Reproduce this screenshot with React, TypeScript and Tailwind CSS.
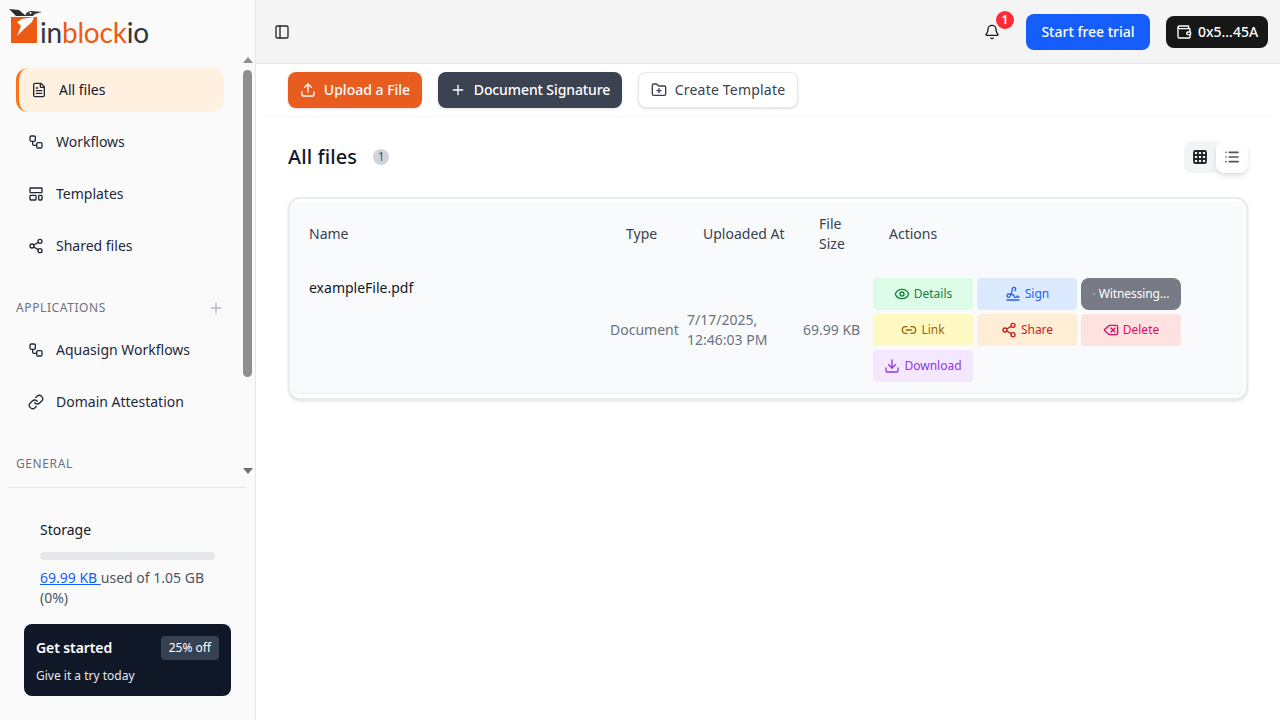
import {
  Bell,
  Delete,
  Download,
  Eye,
  FileText,
  FolderPlus,
  Grid3x3,
  LayoutTemplate,
  Link as LinkIcon,
  Link2,
  List,
  PanelLeft,
  Plus,
  Share2,
  Signature,
  Upload,
  Wallet,
  Workflow,
} from "lucide-react";

const ACTIONS = [
  { label: "Details", icon: Eye, color: "bg-[#dcfce7] text-[#15803d]" },
  { label: "Sign", icon: Signature, color: "bg-[#dbeafe] text-[#2563eb]" },
  { label: "Witnessing...", icon: null, color: "bg-[#777b85] text-white rounded-lg tracking-[-0.1px]" },
  { label: "Link", icon: Link2, color: "bg-[#fef9c3] text-[#a16207]" },
  { label: "Share", icon: Share2, color: "bg-[#ffedd5] text-[#c81e1e]" },
  { label: "Delete", icon: Delete, color: "bg-[#fee2e2] text-[#db0f63]" },
  { label: "Download", icon: Download, color: "bg-[#f3e8ff] text-[#9333ea]" },
];

function NavItem({ icon: Icon, label }: { icon: typeof Eye; label: string }) {
  return (
    <div className="flex h-11 shrink-0 items-center gap-3 rounded-xl pl-3 text-sm text-[#1e293b]">
      <Icon size={16} className="shrink-0 text-[#1f2937]" />
      <span>{label}</span>
    </div>
  );
}

function SectionLabel({ label, plus }: { label: string; plus?: boolean }) {
  return (
    <div className="flex h-5 shrink-0 items-center justify-between text-xs tracking-[0.05em] text-[#6b7280]">
      <span>{label}</span>
      {plus && <Plus size={16} className="text-[#b4b9c4]" />}
    </div>
  );
}

function Logo() {
  return (
    <div className="flex h-[52px] shrink-0 items-end pb-[6px] pl-[11px]">
      <svg width="40" height="36" viewBox="0 0 40 36" className="-mr-[11px] mb-[2px] shrink-0 overflow-visible">
        <path d="M0 9h26v26H0z" fill="#ee5a12" />
        <path d="M11 11l12-2-2 5-8 7-7 7 4-10-4-4z" fill="#fff" />
        <path d="M-2 1l10 1 7 6-10 0z" fill="#2b2b2b" />
        <path d="M14 8c1-4 4-5 7-5l10 1-7 2-2 2z" fill="#3a3a3a" />
        <circle cx="19.5" cy="5" r="1" fill="#fff" />
      </svg>
      <span className="font-['Lato',sans-serif] text-[28px] leading-[27px] font-normal tracking-[-0.2px] text-[#33363b]">
        in<span className="text-[#ee5a12]">block</span>io
      </span>
    </div>
  );
}

function Scrollbar() {
  return (
    <div className="absolute top-0 right-0 flex h-full w-[15px] flex-col items-center">
      <svg width="10" height="6" viewBox="0 0 10 6" className="mt-[5px] shrink-0">
        <path d="M5 0l5 6H0z" fill="#8f8f8f" />
      </svg>
      <div className="mt-[7px] h-[307px] w-[9px] rounded-full bg-[#8f8f8f]" />
      <svg width="10" height="6" viewBox="0 0 10 6" className="mt-auto mb-[6px] shrink-0">
        <path d="M5 6L10 0H0z" fill="#6f6f6f" />
      </svg>
    </div>
  );
}

function Sidebar() {
  return (
    <aside className="flex h-full w-[256px] shrink-0 flex-col border-r border-[#e5e7eb] bg-[#fafafa]">
      <Logo />
      <div className="relative h-[428px] shrink-0 overflow-hidden pl-4">
        <div className="flex w-[208px] flex-col gap-2 pt-4">
          <div className="flex h-11 shrink-0 items-center gap-3 rounded-xl border-l-[3px] border-[#f97316] bg-[#fff0e0] pl-3 text-sm text-[#0f172a]">
            <FileText size={16} className="shrink-0 text-[#1f2937]" />
            <span>All files</span>
          </div>
          <NavItem icon={Workflow} label="Workflows" />
          <NavItem icon={LayoutTemplate} label="Templates" />
          <NavItem icon={Share2} label="Shared files" />
          <div className="mt-[22px] mb-[2px]">
            <SectionLabel label="APPLICATIONS" plus />
          </div>
          <NavItem icon={Workflow} label="Aquasign Workflows" />
          <NavItem icon={LinkIcon} label="Domain Attestation" />
          <div className="mt-[22px] mb-[2px]">
            <SectionLabel label="GENERAL" />
          </div>
        </div>
        <Scrollbar />
      </div>
      <div className="mx-2 mt-[7px] h-px shrink-0 bg-[#e5e7eb]" />
      <div className="px-10 pt-8">
        <div className="text-sm leading-[20px] text-[#111827]">Storage</div>
        <div className="mt-3 h-2 rounded-full bg-[#e5e7eb]" />
        <p className="mt-2 text-sm leading-[20px] text-[#4b5563]">
          <span className="text-[#155dfc] underline">69.99 KB </span>used of 1.05 GB (0%)
        </p>
      </div>
      <div className="mx-6 mt-4 h-[72px] rounded-lg bg-[#101828] px-3 pt-3">
        <div className="flex items-center justify-between">
          <span className="text-sm font-semibold tracking-[-0.1px] text-white">Get started</span>
          <span className="rounded bg-[#364153] px-2 py-1 text-xs text-white">25% off</span>
        </div>
        <div className="mt-2 text-xs leading-[16px] text-[#e5e7eb]">Give it a try today</div>
      </div>
    </aside>
  );
}

function Header() {
  return (
    <header className="flex h-16 shrink-0 items-center border-b border-[#e5e7eb] bg-[#f4f4f5] pr-3 pl-[18px]">
      <PanelLeft size={16} className="text-[#262626]" />
      <div className="ml-auto flex items-center">
        <div className="relative mr-[26px] text-[#171717]">
          <Bell size={16} />
          <span className="absolute -top-[13px] left-[12px] flex h-[18px] w-[18px] items-center justify-center rounded-full bg-[#fb2c36] text-xs font-semibold text-white">
            1
          </span>
        </div>
        <button className="h-9 w-[124px] rounded-lg bg-[#155dfc] text-sm font-medium text-white">
          Start free trial
        </button>
        <button className="ml-4 flex h-8 w-[102px] items-center justify-center gap-[6px] rounded-lg bg-[#171717] text-sm font-medium text-white">
          <Wallet size={16} />
          0x5...45A
        </button>
      </div>
    </header>
  );
}

function Toolbar() {
  return (
    <div className="mx-2 flex h-[53px] shrink-0 items-start gap-4 border-b border-[#f3f4f6] px-6 pt-2">
      <button className="flex h-9 w-[134px] items-center justify-center gap-2 rounded-lg bg-[#e85c1f] text-sm font-medium text-white shadow-sm">
        <Upload size={16} />
        Upload a File
      </button>
      <button className="flex h-9 w-[184px] items-center justify-center gap-2 rounded-lg bg-[#3b4252] text-sm font-medium tracking-[-0.1px] text-white shadow-sm">
        <Plus size={16} />
        Document Signature
      </button>
      <button className="flex h-9 w-[160px] items-center justify-center gap-2 rounded-lg border border-[#e5e7eb] bg-white text-sm tracking-[0.2px] text-[#374151] shadow-sm">
        <FolderPlus size={16} />
        Create Template
      </button>
    </div>
  );
}

function FilesTable() {
  return (
    <div className="rounded-xl border-2 border-[#ebecef] bg-white pt-[3px] pr-[2px] pb-[4px] pl-[1px] shadow-sm">
      <div className="rounded-lg border-b border-[#f1f2f4] bg-[#f9fafb]">
        <table className="w-full table-fixed border-collapse text-sm">
          <colgroup>
            <col className="w-[319px]" />
            <col className="w-[77px]" />
            <col className="w-[116px]" />
            <col className="w-[70px]" />
            <col />
          </colgroup>
          <thead>
            <tr className="h-[65px] text-left text-[#374151]">
              <th className="pb-[2px] pl-[18px] font-normal">Name</th>
              <th className="pb-[2px] pl-4 font-normal">Type</th>
              <th className="pb-[2px] pl-4 font-normal">Uploaded At</th>
              <th className="pb-[2px] pl-4 font-normal">
                File
                <br />
                Size
              </th>
              <th className="pb-[2px] pl-4 font-normal">Actions</th>
            </tr>
          </thead>
          <tbody>
            <tr className="h-[126px]">
              <td className="pt-[11px] pl-[18px] align-top text-[#111827]">exampleFile.pdf</td>
              <td className="whitespace-nowrap text-[#6b7280]">Document</td>
              <td className="text-[#6b7280]">
                7/17/2025,
                <br />
                12:46:03 PM
              </td>
              <td className="whitespace-nowrap text-[#6b7280]">69.99 KB</td>
              <td>
                <div className="flex w-[308px] flex-wrap gap-1">
                  {ACTIONS.map(({ label, icon: Icon, color }) => (
                    <button
                      key={label}
                      className={`flex h-8 w-[100px] items-center justify-center gap-1 rounded text-xs ${color}`}
                    >
                      {Icon ? <Icon size={16} /> : <span className="h-[2px] w-[2px] rounded-full bg-[#a3a6ad]" />}
                      {label}
                    </button>
                  ))}
                </div>
              </td>
            </tr>
          </tbody>
        </table>
      </div>
    </div>
  );
}

export default function App() {
  return (
    <div className="flex h-[720px] w-[1280px] overflow-hidden bg-white font-['Noto_Sans',sans-serif]">
      <Sidebar />
      <main className="flex min-w-0 flex-1 flex-col">
        <Header />
        <Toolbar />
        <div className="px-8">
          <div className="mt-6 flex h-8 items-center justify-between">
            <div className="flex items-center gap-4">
              <h1 className="text-xl font-medium tracking-[0.1px] text-[#111827]">All files</h1>
              <span className="flex h-4 w-4 items-center justify-center rounded-full bg-[#d1d5db] text-xs text-[#4b5563]">
                1
              </span>
            </div>
            <div className="flex h-8 w-16 rounded-lg bg-[#f3f4f6]">
              <div className="flex w-8 items-center justify-center text-[#262626]">
                <Grid3x3 size={16} strokeWidth={2.75} />
              </div>
              <div className="flex w-8 items-center justify-center rounded-lg bg-white text-[#4b5563] shadow-md">
                <List size={16} strokeWidth={2.5} />
              </div>
            </div>
          </div>
          <div className="mt-6">
            <FilesTable />
          </div>
        </div>
      </main>
    </div>
  );
}
